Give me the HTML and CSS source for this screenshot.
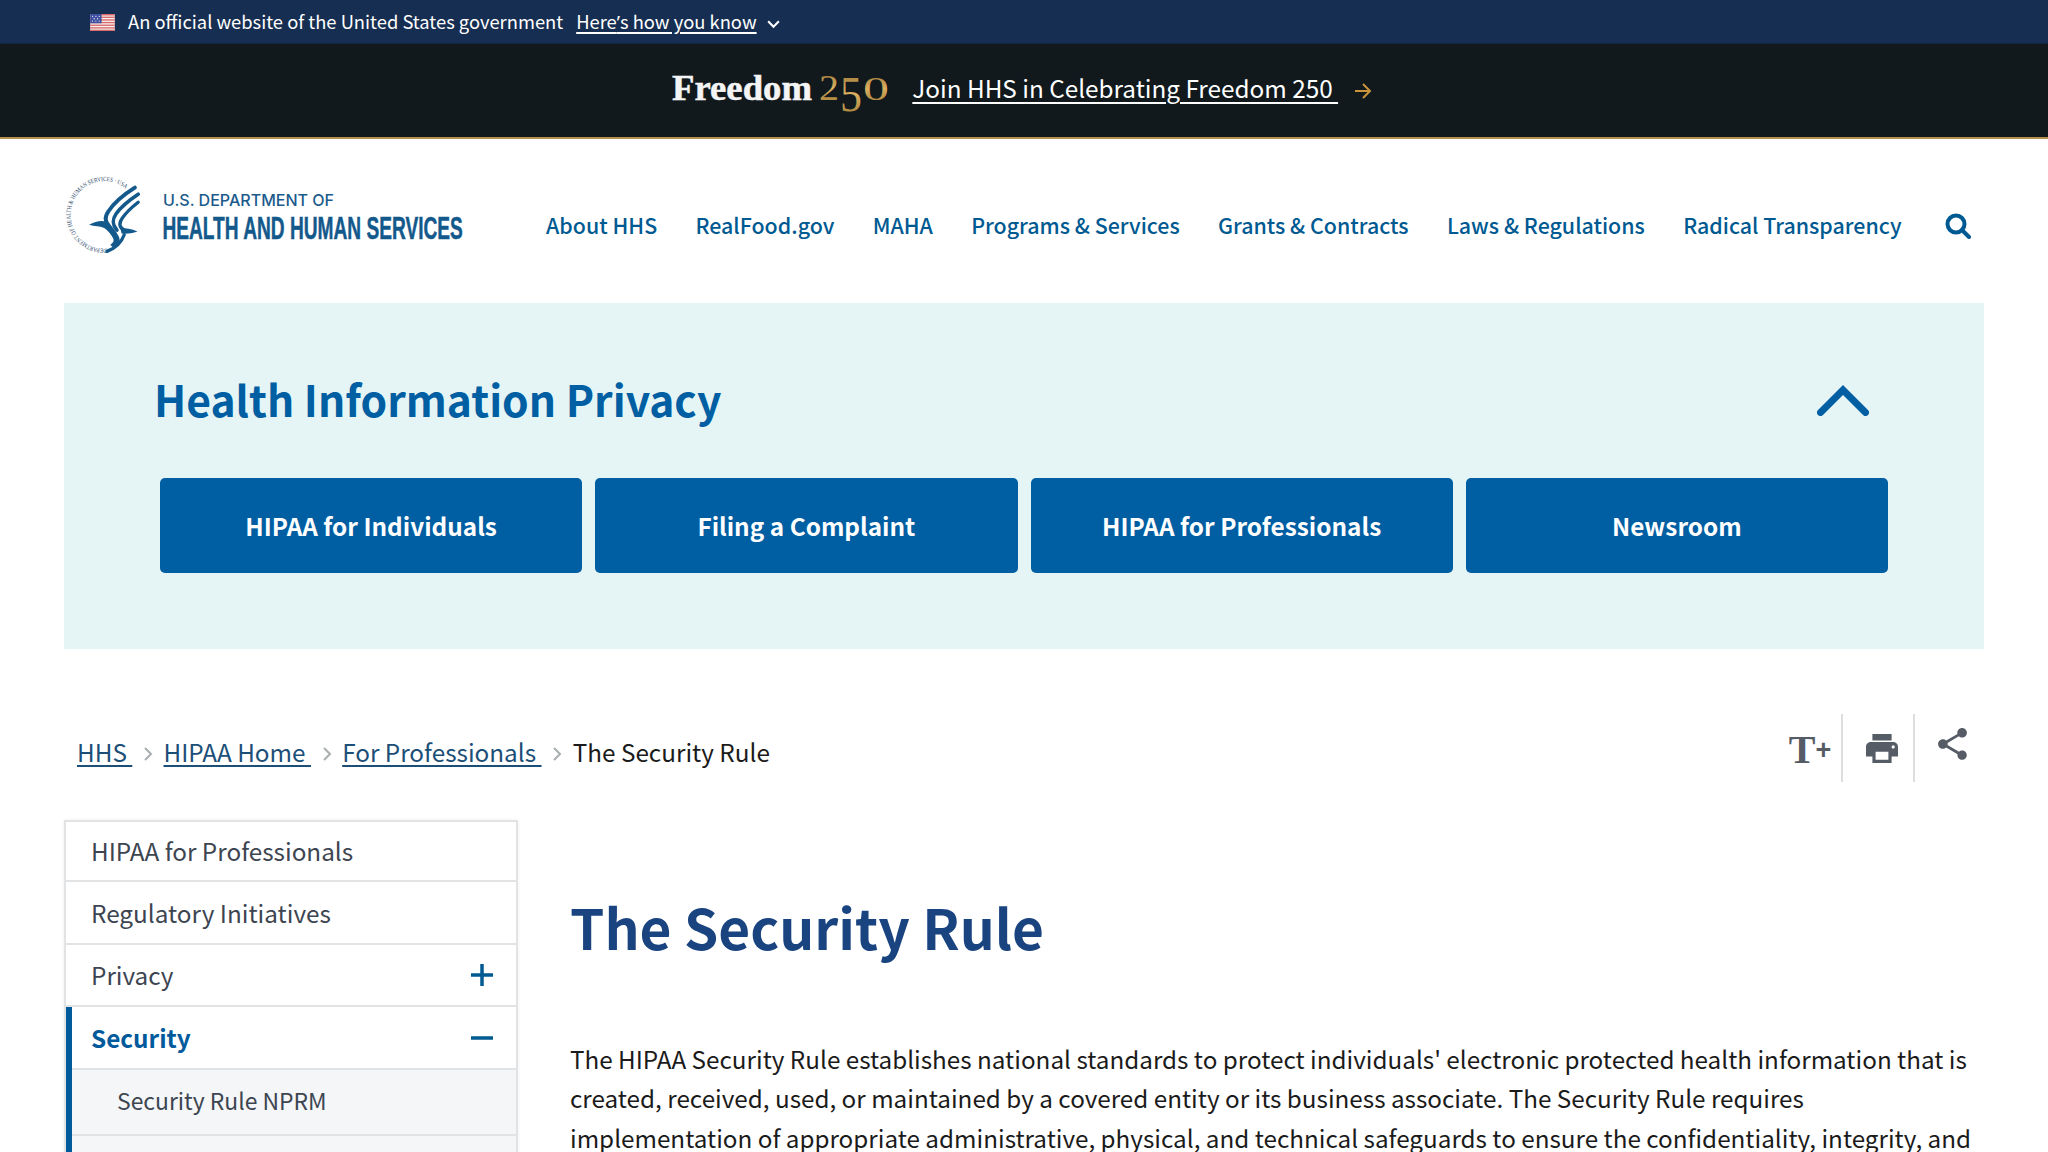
FILE: index.html
```html
<!DOCTYPE html>
<html lang="en">
<head>
<meta charset="utf-8">
<title>The Security Rule | HHS.gov</title>
<link rel="stylesheet" href="styles.css">
</head>
<body>
<div class="gov-banner">
  <svg class="flag" viewBox="0 0 26 18" aria-hidden="true">
    <rect width="26" height="18" fill="#f8f0ee"/>
    <g fill="#d8686a">
      <rect width="26" height="1.6"/><rect y="2.8" width="26" height="1.4"/><rect y="5.6" width="26" height="1.4"/><rect y="8.4" width="26" height="1.4"/><rect y="11.2" width="26" height="1.4"/><rect y="14" width="26" height="1.4"/><rect y="16.6" width="26" height="1.4"/>
    </g>
    <rect width="12" height="9.8" fill="#3f4f9f"/>
    <g fill="#e8ecf8"><circle cx="2.5" cy="2.5" r=".7"/><circle cx="6" cy="2.5" r=".7"/><circle cx="9.5" cy="2.5" r=".7"/><circle cx="4.2" cy="5" r=".7"/><circle cx="7.8" cy="5" r=".7"/><circle cx="2.5" cy="7.5" r=".7"/><circle cx="6" cy="7.5" r=".7"/><circle cx="9.5" cy="7.5" r=".7"/></g>
  </svg>
  <span class="gov-text">An official website of the United States government</span>
  <a class="gov-link" href="#">Here<span class="apos">’</span>s how you know</a>
  <svg class="gov-caret" viewBox="0 0 14 10" aria-hidden="true"><path d="M2 2l5 5 5-5" fill="none" stroke="#fff" stroke-width="2"/></svg>
</div>

<div class="promo">
  <svg class="f250" viewBox="0 0 218 52" role="img" aria-label="Freedom 250">
    <defs><linearGradient id="gold" x1="0" y1="0" x2="0" y2="1"><stop offset="0" stop-color="#8f6e30"/><stop offset=".5" stop-color="#dcb060"/><stop offset="1" stop-color="#96722f"/></linearGradient></defs>
    <text class="f-word" x="0" y="34" textLength="140" lengthAdjust="spacingAndGlyphs">Freedom</text>
    <text class="f-num" x="147" y="34" textLength="20" lengthAdjust="spacingAndGlyphs">2</text>
    <text class="f-five" x="168" y="45" textLength="22" lengthAdjust="spacingAndGlyphs">5</text>
    <text class="f-zero" x="191" y="34" textLength="26" lengthAdjust="spacingAndGlyphs">0</text>
  </svg>
  <a class="promo-link" href="#">Join HHS in Celebrating Freedom 250&nbsp;</a>
  <svg class="promo-arrow" viewBox="0 0 18 18" aria-hidden="true"><path d="M1 9h15M9 2l7 7-7 7" fill="none" stroke="#c9943a" stroke-width="2"/></svg>
</div>

<header class="site-header">
  <svg class="logo" viewBox="65 40 1224 250" role="img" aria-label="U.S. Department of Health and Human Services">
    <defs><path id="ring" d="M138 232A102 102 0 1 1 198 54"/></defs>
    <g transform="translate(60 36)">
      <text class="seal-text"><textPath href="#ring" textLength="398" lengthAdjust="spacingAndGlyphs">DEPARTMENT OF HEALTH &amp; HUMAN SERVICES · USA</textPath></text>
      <g class="eagle">
        <path d="M222 48C190 68 160 92 142 120C130 138 132 150 146 166" stroke-width="12"/>
        <path d="M232 68C205 86 182 104 166 126C152 146 154 160 168 176" stroke-width="11"/>
        <path d="M232 92C214 106 196 122 184 140C172 158 176 168 190 176" stroke-width="10"/>
        <path class="solid" d="M84 160C100 150 122 146 134 150C152 160 166 180 174 196C180 210 172 222 158 230L148 220C160 212 160 206 154 196C144 180 132 168 118 166C106 164 96 164 84 160Z"/>
        <path class="solid" d="M178 170C195 170 212 172 230 180C212 186 196 188 182 186Z"/>
        <path d="M190 190C182 212 166 230 138 240" stroke-width="10"/>
      </g>
    </g>
    <text class="logo-top" x="367" y="138" textLength="515" lengthAdjust="spacingAndGlyphs">U.S. DEPARTMENT OF</text>
    <text class="logo-main" x="365" y="240" textLength="905" lengthAdjust="spacingAndGlyphs">HEALTH AND HUMAN SERVICES</text>
  </svg>
  <nav class="main-nav">
    <a href="#">About HHS</a>
    <a href="#">RealFood.gov</a>
    <a href="#">MAHA</a>
    <a href="#">Programs &amp; Services</a>
    <a href="#">Grants &amp; Contracts</a>
    <a href="#">Laws &amp; Regulations</a>
    <a href="#">Radical Transparency</a>
  </nav>
  <svg class="search" viewBox="0 0 26 26" aria-label="Search"><circle cx="11" cy="11" r="8.5" fill="none" stroke="#005a92" stroke-width="4"/><path d="M17 17l7 7" stroke="#005a92" stroke-width="4" stroke-linecap="round"/></svg>
</header>

<section class="hip-panel">
  <div class="hip-head">
    <h2 class="hip-title">Health Information Privacy</h2>
    <svg class="hip-chevron" viewBox="0 0 52 32" aria-hidden="true"><path d="M3.500 28.500L26 6l22.500 22.500" fill="none" stroke="#005ea2" stroke-width="7" stroke-linecap="round"/></svg>
  </div>
  <div class="hip-buttons">
    <a class="hip-btn" href="#">HIPAA for Individuals</a>
    <a class="hip-btn" href="#">Filing a Complaint</a>
    <a class="hip-btn" href="#">HIPAA for Professionals</a>
    <a class="hip-btn" href="#">Newsroom</a>
  </div>
</section>

<div class="crumb-row">
  <ol class="crumbs">
    <li><a href="#">HHS&nbsp;</a></li>
    <li class="sep"><svg viewBox="0 0 10 16" aria-hidden="true"><path d="M2 2l6 6-6 6" fill="none" stroke="#a9aeb1" stroke-width="2"/></svg></li>
    <li><a href="#">HIPAA Home&nbsp;</a></li>
    <li class="sep"><svg viewBox="0 0 10 16" aria-hidden="true"><path d="M2 2l6 6-6 6" fill="none" stroke="#a9aeb1" stroke-width="2"/></svg></li>
    <li><a href="#">For Professionals&nbsp;</a></li>
    <li class="sep"><svg viewBox="0 0 10 16" aria-hidden="true"><path d="M2 2l6 6-6 6" fill="none" stroke="#a9aeb1" stroke-width="2"/></svg></li>
    <li class="current">The Security Rule</li>
  </ol>
  <div class="tools">
    <div class="tool tool-text"><span class="t-big">T</span><span class="t-plus">+</span></div>
    <div class="tool tool-print"><svg viewBox="2 3 20 18" aria-label="Print"><path d="M19 8H5c-1.660 0-3 1.340-3 3v6h4v4h12v-4h4v-6c0-1.660-1.340-3-3-3zm-3 11H8v-5h8v5zm3-7c-.55 0-1-.45-1-1s.45-1 1-1 1 .45 1 1-.45 1-1 1zm-1-9H6v4h12V3z"/></svg></div>
    <div class="tool tool-share"><svg viewBox="3 2 18 20" aria-label="Share"><path d="M18 16.080c-.76 0-1.440.3-1.960.77L8.910 12.700c.05-.23.09-.46.09-.7s-.04-.47-.09-.7l7.050-4.110c.54.5 1.250.81 2.040.81 1.660 0 3-1.340 3-3s-1.340-3-3-3-3 1.340-3 3c0 .24.04.47.09.7L8.040 9.810C7.500 9.310 6.790 9 6 9c-1.660 0-3 1.340-3 3s1.340 3 3 3c.79 0 1.500-.31 2.040-.81l7.120 4.160c-.05.21-.08.43-.08.65 0 1.610 1.310 2.920 2.920 2.920 1.610 0 2.920-1.310 2.920-2.920s-1.310-2.920-2.920-2.920z"/></svg></div>
  </div>
</div>

<div class="content">
  <aside class="side">
    <a class="side-item side-first" href="#">HIPAA for Professionals</a>
    <a class="side-item" href="#">Regulatory Initiatives</a>
    <a class="side-item" href="#">Privacy<svg class="side-icon" viewBox="0 0 22 22" aria-hidden="true"><path d="M0 11h22M11 0v22" stroke="#005a92" stroke-width="3.500"/></svg></a>
    <div class="side-group">
      <a class="side-item side-active" href="#">Security<svg class="side-icon" viewBox="0 0 22 22" aria-hidden="true"><path d="M0 11h22" stroke="#005a92" stroke-width="3.500"/></svg></a>
      <a class="side-item side-sub" href="#">Security Rule NPRM</a>
    </div>
  </aside>
  <main class="article">
    <h1 class="page-title">The Security Rule</h1>
    <p class="lead">The HIPAA Security Rule establishes national standards to protect individuals' electronic protected health information that is created, received, used, or maintained by a covered entity or its business associate. The Security Rule requires implementation of appropriate administrative, physical, and technical safeguards to ensure the confidentiality, integrity, and</p>
  </main>
</div>
</body>
</html>
```
FILE: styles.css
```css
html, body { margin: 0; padding: 0; height: 1152px; overflow: hidden; background: #fff; }
body { font-family: "Noto Sans CJK SC", "Noto Sans", sans-serif; color: #1b1b1b; }
a { color: inherit; }

.gov-banner { height: 41px; background: #162e51; border-bottom: 1px solid #10243f; display: flex; align-items: center; padding: 0 0 2px 90px; color: #fff; font-size: 18.350px; line-height: 40px; }
.flag { width: 25px; height: 17px; margin: 4px 13px 0 0; }
.gov-text { margin-right: 13px; }
.gov-link { margin-top: 2px; text-decoration: underline; text-decoration-thickness: 1.500px; text-underline-offset: 3px; }
.apos { font-family: "Noto Sans", sans-serif; }
.gov-caret { width: 15px; height: 11px; margin: 7px 0 0 9px; }

.promo { height: 93px; background: #11191d; border-bottom: 2px solid #b8924c; display: flex; align-items: center; justify-content: center; color: #fff; font-size: 24.300px; }
.f250 { width: 218px; height: 52px; margin-right: 22px; margin-top: 3px; }
.f-word { font: 700 36px "Liberation Serif", serif; fill: #f4f4f4; stroke: #f4f4f4; stroke-width: .5px; }
.f-num { font: 400 36px "Liberation Serif", serif; fill: url(#gold); }
.f-five { font: 400 50px "Liberation Serif", serif; fill: url(#gold); }
.f-zero { font: 400 34px "Liberation Serif", serif; fill: url(#gold); }
.promo-link { margin-top: -6px; text-decoration: underline; text-decoration-thickness: 1.500px; text-underline-offset: 4px; }
.promo-arrow { width: 18px; height: 18px; margin: 1px 3.600px 0 16px; }

.site-header { height: 164px; box-sizing: border-box; padding: 34px 0 0 62px; display: flex; align-items: flex-start; }
.logo { width: 408px; height: 83px; flex: none; }
.seal-text { font: 400 19px "Liberation Serif", serif; fill: #2d4a6b; }
.eagle path { fill: none; stroke: #14598c; stroke-linecap: round; }
.eagle .solid { fill: #14598c; stroke: none; }
.logo-top { font: 500 48px Inter, "Liberation Sans", sans-serif; fill: #1b5b8c; }
.logo-main { font: 700 94px "Liberation Sans Narrow", "Liberation Sans", sans-serif; fill: #14598c; stroke: #14598c; stroke-width: 1.500px; }

.main-nav { display: flex; gap: 38.300px; height: 102px; align-items: center; margin-left: 76px; color: #005a92; font-size: 21.400px; font-weight: 500; white-space: nowrap; }
.main-nav a { text-decoration: none; }
.search { width: 26px; height: 26px; margin: 40px 0 0 43px; flex: none; }

.hip-panel { margin: 0 64px; height: 346px; box-sizing: border-box; background: #e5f5f6; padding: 50px 96px 0; }
.hip-head { display: flex; height: 90px; align-items: center; justify-content: space-between; margin: 0 19px 35px -6px; }
.hip-title { margin: 0; font-size: 42.600px; font-weight: 700; color: #005ea2; }
.hip-chevron { width: 52px; height: 32px; margin-top: 4px; }
.hip-buttons { display: grid; grid-template-columns: repeat(4, 1fr); gap: 13px; }
.hip-btn { height: 95px; display: flex; align-items: center; justify-content: center; background: #005ea2; border-radius: 5px; color: #fff; font-size: 24.350px; font-weight: 700; text-decoration: none; }

.crumb-row { margin: 0 64px; height: 171px; display: flex; justify-content: space-between; align-items: flex-start; }
.crumbs { list-style: none; margin: 83px 0 0 13px; padding: 0; display: flex; align-items: center; font-size: 24.300px; line-height: 40px; gap: 10.600px; }
.crumbs a { color: #1c4f78; text-decoration-thickness: 1.500px; text-underline-offset: 3px; }
.crumbs .current { color: #1b1b1b; }
.sep svg { width: 10px; height: 16px; display: block; margin-top: 4px; }

.tools { display: flex; margin-top: 65px; margin-right: 11px; height: 68px; }
.tool { width: 72px; box-sizing: border-box; display: flex; align-items: center; justify-content: center; border-right: 2px solid #dcdee0; }
.tool svg { fill: #565c65; }
.tool-share { border-right: 0; width: 58px; justify-content: flex-start; }
.tool-text { font-family: "Liberation Serif", serif; font-weight: 700; color: #565c65; line-height: 1; padding: 4px 0 0 8px; }
.t-big { font-size: 40px; }
.t-plus { font-family: "Liberation Sans", sans-serif; font-size: 27px; }
.tool-print svg { width: 32px; height: 29px; margin-left: 8px; }
.tool-share svg { width: 29px; height: 32px; margin: -8px 0 0 23px; }

.content { margin: 0 64px; display: flex; align-items: flex-start; }
.side { width: 454px; flex: none; box-sizing: border-box; border: 2px solid #e1e3e4; border-bottom: 0; box-shadow: 0 0 3px rgba(0,0,0,.08); }
.side-item { height: 62.400px; box-sizing: border-box; padding: 0 23px 0 25px; display: flex; align-items: center; justify-content: space-between; font-size: 24.300px; color: #3d4551; text-decoration: none; border-bottom: 2px solid #e1e3e4; }
.side-first { height: 60.400px; padding-bottom: 2px; }
.side-group { border-left: 6px solid #005a9c; height: 200px; background: #f4f6f7; }
.side-active { padding-left: 19px; font-weight: 700; color: #005a9c; background: #fff; }
.side-sub { background: #f4f6f7; padding-left: 45px; padding-bottom: 3px; height: 66px; font-size: 22.900px; }
.side-icon { width: 22px; height: 22px; flex: none; margin-top: 1px; }

.article { margin-left: 52px; width: 1414px; }
.page-title { margin: 61px 0 0; font-size: 55px; line-height: 90px; font-weight: 700; color: #1a4480; }
.lead { margin: 67.500px 0 0; font-size: 24.260px; line-height: 39.500px; color: #1b1b1b; }
```
